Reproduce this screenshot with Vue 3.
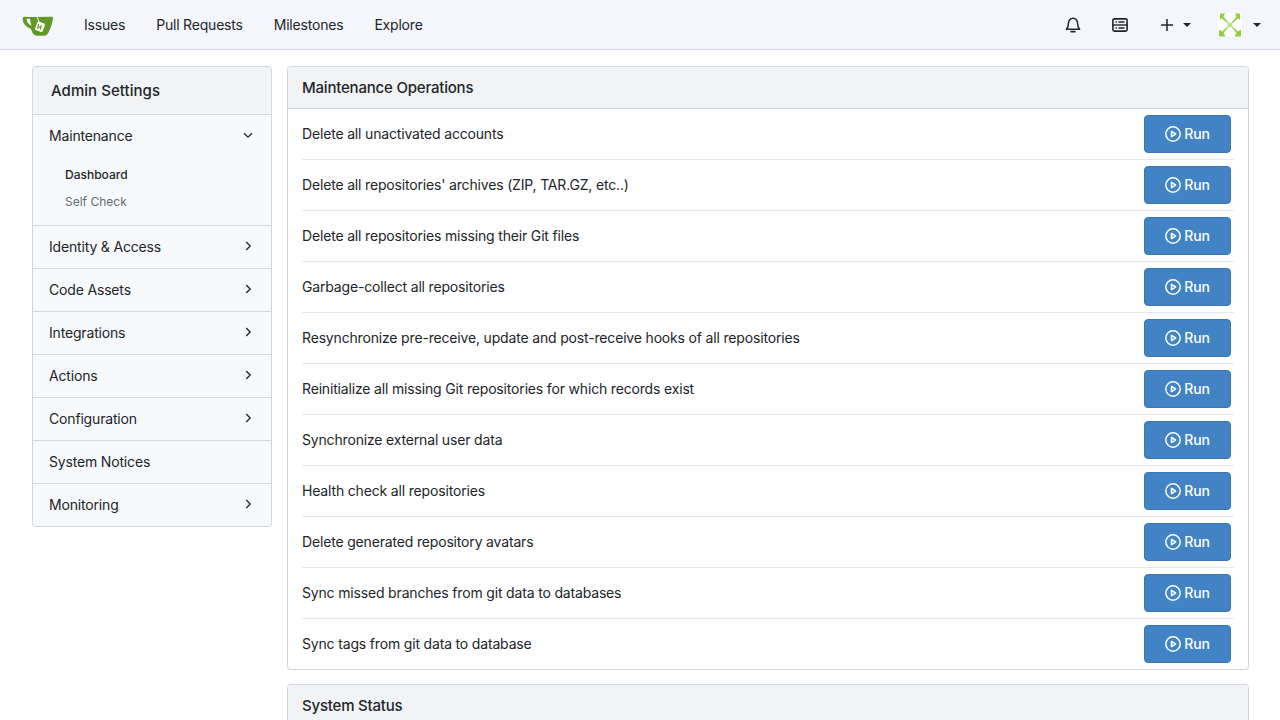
<script setup>
const navLinks = ['Issues', 'Pull Requests', 'Milestones', 'Explore']

const menuItems = [
  { label: 'Identity & Access', arrow: true },
  { label: 'Code Assets', arrow: true },
  { label: 'Integrations', arrow: true },
  { label: 'Actions', arrow: true },
  { label: 'Configuration', arrow: true },
  { label: 'System Notices', arrow: false },
  { label: 'Monitoring', arrow: true },
]

const operations = [
  'Delete all unactivated accounts',
  "Delete all repositories' archives (ZIP, TAR.GZ, etc..)",
  'Delete all repositories missing their Git files',
  'Garbage-collect all repositories',
  'Resynchronize pre-receive, update and post-receive hooks of all repositories',
  'Reinitialize all missing Git repositories for which records exist',
  'Synchronize external user data',
  'Health check all repositories',
  'Delete generated repository avatars',
  'Sync missed branches from git data to databases',
  'Sync tags from git data to database',
]
</script>

<template>
  <div class="page">
    <nav class="navbar">
      <svg class="logo" viewBox="0 0 32 22" width="32" height="22">
        <path d="M1.500 3C4 2.400 7 3 10 3L29.500 2.700C31 2.700 31.200 3.600 31 4.600C30 10 28.500 15 26.500 18.500C25.500 20.500 24 21.800 22 21.800H15.500C13 21.800 11.500 20.500 10.500 18.800C10 17.800 9.500 16.500 9 15C5 13 1.500 10.500 .8 6.500C.5 4.500.7 3.200 1.500 3Z" fill="#609926" />
        <path d="M4.500 4.800C6 4.600 7 4.800 8 4.800C8.200 7.500 8.800 10 9.500 11.800C7 11 4.800 8 4.500 4.800Z" fill="#f4f6fb" />
        <path d="M14.500 1.500L17 8" stroke="#f4f6fb" stroke-width="1" fill="none" />
        <rect x="14" y="8.200" width="8" height="9" rx="1.200" transform="rotate(20 18 12.700)" fill="#fff" />
        <path d="M16.600 10L15.700 15M19.400 11L18.200 15.600M16.300 12.700L18.800 13.500" stroke="#609926" stroke-width="1.200" fill="none" />
      </svg>
      <a v-for="link in navLinks" :key="link" class="nav-link">{{ link }}</a>
      <div class="nav-right">
        <svg class="nav-icon bell" viewBox="0 0 16 16" width="16" height="16" fill="none" stroke="#212529" stroke-width="1.500">
          <path d="M1.400 12.300c1.200-1.200 2.100-3 2.100-6.200A4.500 4.500 0 0 1 8 1.300a4.500 4.500 0 0 1 4.500 4.800c0 3.200.9 5 2.100 6.200Z" stroke-linejoin="round" />
          <path d="M6.200 14.700h3.600" stroke-linecap="round" stroke-width="1.800" />
        </svg>
        <svg class="nav-icon server" viewBox="0 0 16 16" width="16" height="16" fill="none" stroke="#212529">
          <rect x=".9" y="1.900" width="14.200" height="12.200" rx="1.500" stroke-width="1.600" />
          <path d="M1 8h14" stroke-width="1.400" />
          <path d="M3.500 5h1.500M6.500 5h6M3.500 11h1.500M6.500 11h6" stroke-width="1.400" />
        </svg>
        <div class="nav-plus">
          <svg viewBox="0 0 16 16" width="16" height="16" fill="none" stroke="#212529" stroke-width="1.500">
            <path d="M8 2v12M2 8h12" />
          </svg>
          <span class="caret"></span>
        </div>
        <div class="nav-user">
          <svg class="avatar" viewBox="0 0 24 24" width="24" height="24">
            <rect width="24" height="24" fill="#fff" />
            <g fill="#96cc3f">
              <path d="M2 .5H7L5.500 3.500 11 10.500 10.500 11 3.500 5 2 7.500Z" />
              <path d="M22 .5H17L18.500 3.500 13 10.500 13.500 11 20.500 5 22 7.500Z" />
              <path d="M1 23.500H7.500L5.500 20 11 13.500 10.500 13 4 18.500 1 16.500Z" />
              <path d="M23 23.500H16.500L18.500 20 13 13.500 13.500 13 20 18.500 23 16.500Z" />
              <path d="M9.500 11.500h5v1h-5ZM11.500 9.500h1v5h-1Z" />
            </g>
          </svg>
          <span class="caret"></span>
        </div>
      </div>
    </nav>

    <div class="content">
      <aside class="sidebar">
        <div class="side-title">Admin Settings</div>
        <div class="side-group">
          <div class="side-row">
            <span>Maintenance</span>
            <svg viewBox="0 0 16 16" width="14" height="14" fill="none" stroke="#212529" stroke-width="1.500">
              <path d="M3.500 6L8 10.500 12.500 6" />
            </svg>
          </div>
          <div class="sub-list">
            <a class="sub-item active">Dashboard</a>
            <a class="sub-item">Self Check</a>
          </div>
        </div>
        <div v-for="item in menuItems" :key="item.label" class="side-row side-item">
          <span>{{ item.label }}</span>
          <svg v-if="item.arrow" viewBox="0 0 16 16" width="14" height="14" fill="none" stroke="#212529" stroke-width="1.500">
            <path d="M6 3.500L10.500 8 6 12.500" />
          </svg>
        </div>
      </aside>

      <main class="main">
        <section class="panel">
          <h4 class="panel-head">Maintenance Operations</h4>
          <div class="panel-body">
            <div v-for="op in operations" :key="op" class="op-row">
              <span class="op-text">{{ op }}</span>
              <button class="run-btn">
                <svg viewBox="0 0 16 16" width="16" height="16" fill="none" stroke="#fff" stroke-width="1.500">
                  <circle cx="8" cy="8" r="7.200" />
                  <path d="M6.500 5.300L10.600 8 6.500 10.700Z" stroke-linejoin="round" />
                </svg>
                <span class="run-label">Run</span>
              </button>
            </div>
          </div>
        </section>
        <section class="panel">
          <h4 class="panel-head status">System Status</h4>
        </section>
      </main>
    </div>
  </div>
</template>

<style>
html, body {
  margin: 0;
  height: 720px;
  overflow: hidden;
  background: #fff;
}
</style>

<style scoped>
.page {
  font-family: Inter, "Liberation Sans", sans-serif;
  font-size: 14px;
  color: #212529;
}

.navbar {
  display: flex;
  align-items: center;
  height: 49px;
  padding-left: 22px;
  background: #f4f6fb;
  border-bottom: 1px solid #d0d7e0;
}

.logo {
  margin-right: 14px;
}

.nav-link {
  margin: 0 16px;
  letter-spacing: -0.2px;
}

.nav-link:not(:first-of-type) {
  margin-left: 15px;
}

.nav-right {
  display: flex;
  align-items: center;
  margin-left: auto;
}

.bell {
  margin-right: 31px;
}

.server {
  margin-right: 31px;
}

.nav-plus {
  display: flex;
  align-items: center;
  gap: 8px;
  margin-right: 27px;
}

.nav-user {
  display: flex;
  align-items: center;
  gap: 11px;
  margin-right: 19px;
}

.caret {
  width: 0;
  height: 0;
  border-left: 4px solid transparent;
  border-right: 4px solid transparent;
  border-top: 4px solid #212529;
}

.content {
  display: flex;
  align-items: flex-start;
  gap: 15px;
  padding: 16px 31px 0 32px;
}

.sidebar {
  flex: 0 0 240px;
  box-sizing: border-box;
  border: 1px solid #d0d7e0;
  border-radius: 4px;
  background: #f8f9fb;
}

.side-title {
  height: 47px;
  padding-left: 18px;
  display: flex;
  align-items: center;
  font-size: 15px;
  font-weight: 500;
  letter-spacing: 0.05px;
  background: #f1f3f5;
  border-radius: 4px 4px 0 0;
}

.side-group {
  border-top: 1px solid #d0d7e0;
  height: 110px;
}

.side-row {
  display: flex;
  align-items: center;
  justify-content: space-between;
  box-sizing: border-box;
  height: 42px;
  padding: 0 16px 2px;
  letter-spacing: -0.17px;
}

.side-item {
  height: 43px;
  border-top: 1px solid #d0d7e0;
}

.sub-list {
  display: flex;
  flex-direction: column;
  gap: 10px;
  padding: 9px 0 0 32px;
  font-size: 12px;
}

.sub-item {
  color: #666d75;
  height: 17px;
  line-height: 17px;
}

.sub-item.active {
  color: #212529;
  font-weight: 500;
}

.main {
  flex: 1;
  display: flex;
  flex-direction: column;
  gap: 14px;
}

.panel {
  box-sizing: border-box;
  border: 1px solid #d0d7e0;
  border-radius: 4px;
}

.panel-head {
  margin: 0;
  height: 41px;
  padding-left: 14px;
  display: flex;
  align-items: center;
  font-size: 15px;
  font-weight: 500;
  letter-spacing: -0.2px;
  background: #f1f3f5;
  border-bottom: 1px solid #d0d7e0;
  border-radius: 4px 4px 0 0;
}

.panel-head.status {
  box-sizing: border-box;
  height: 42px;
  border-bottom: none;
  padding-bottom: 2px;
}

.panel-body {
  padding: 0 14px;
}

.op-row {
  display: flex;
  align-items: center;
  justify-content: space-between;
  height: 50px;
  letter-spacing: -0.17px;
  border-bottom: 1px solid #e4e7ec;
}

.op-row:last-child {
  border-bottom: none;
}

.op-text {
  margin-bottom: 2px;
}

.run-btn {
  display: flex;
  align-items: center;
  justify-content: center;
  gap: 3px;
  width: 87px;
  height: 38px;
  margin-right: 3px;
  padding: 0;
  font-family: inherit;
  font-size: 14px;
  font-weight: 500;
  letter-spacing: -0.1px;
  color: #fff;
  background: #4183c4;
  border: 1px solid #3a76b1;
  border-radius: 4px;
}

.run-label {
  margin-bottom: 1px;
}
</style>
